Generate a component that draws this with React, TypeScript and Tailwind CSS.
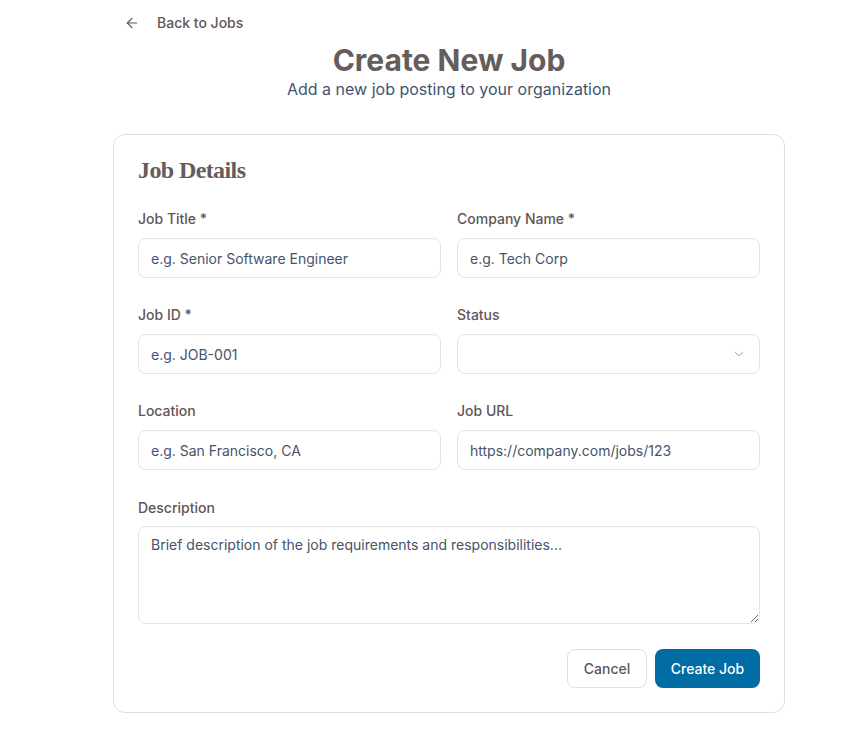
import { ArrowLeft, ChevronDown } from "lucide-react";

const sans = { fontFamily: "Inter, 'Noto Sans', sans-serif" };

function Field({
  label,
  placeholder,
}: {
  label: string;
  placeholder: string;
}) {
  return (
    <div className="flex flex-col">
      <label className="h-5 text-sm font-medium leading-5 text-[#5f5656]">
        {label}
      </label>
      <input
        placeholder={placeholder}
        className="mt-[9px] h-10 w-full rounded-lg border border-[#e3e3e3] bg-white px-3 text-sm text-[#3f4d66] placeholder:text-[#46536b] outline-none"
      />
    </div>
  );
}

export default function App() {
  return (
    <div className="min-h-screen bg-white" style={sans}>
      <div className="ml-[113px] w-[672px] pb-10">
        <button className="mt-[13px] flex h-5 items-center pl-[11px] text-sm font-medium text-[#5f5656]">
          <ArrowLeft className="h-4 w-4" strokeWidth={1.8} />
          <span className="ml-[17px]">Back to Jobs</span>
        </button>

        <div className="mt-[9px] text-center">
          <h1 className="text-3xl font-bold leading-9 text-[#655c5c]">
            Create New Job
          </h1>
          <p className="-mt-px text-base leading-6 text-[#44546e]">
            Add a new job posting to your organization
          </p>
        </div>

        <div className="mt-[33px] rounded-xl border border-[#dedede] bg-white px-6 pb-6 pt-[23px]">
          <h2
            className="text-[24px] font-bold leading-6 tracking-[-0.6px] text-[#655c5c]"
            style={{ fontFamily: "'Liberation Serif', 'DejaVu Serif', serif" }}
          >
            Job Details
          </h2>

          <div className="mt-[27px] grid grid-cols-2 gap-x-4 gap-y-[27px]">
            <Field label="Job Title *" placeholder="e.g. Senior Software Engineer" />
            <Field label="Company Name *" placeholder="e.g. Tech Corp" />
            <Field label="Job ID *" placeholder="e.g. JOB-001" />
            <div className="flex flex-col">
              <label className="h-5 text-sm font-medium leading-5 text-[#5f5656]">
                Status
              </label>
              <button className="mt-[9px] flex h-10 w-full items-center justify-end rounded-lg border border-[#e3e3e3] bg-white px-3">
                <ChevronDown className="h-4 w-4 text-[#a8a8a8]" strokeWidth={1.5} />
              </button>
            </div>
            <Field label="Location" placeholder="e.g. San Francisco, CA" />
            <Field label="Job URL" placeholder="https://company.com/jobs/123" />
          </div>

          <div className="mt-[28px] flex flex-col">
            <label className="h-5 text-sm font-medium leading-5 text-[#5f5656]">
              Description
            </label>
            <textarea
              placeholder="Brief description of the job requirements and responsibilities..."
              className="mt-2 h-[98px] w-full rounded-lg border border-[#e3e3e3] bg-white px-3 py-2 text-sm leading-5 text-[#3f4d66] placeholder:text-[#46536b] outline-none"
            />
          </div>

          <div className="mt-[25px] flex justify-end gap-2">
            <button className="h-[39px] w-[80px] rounded-lg border border-[#e0e0e0] bg-white text-sm font-medium text-[#5f5656]">
              Cancel
            </button>
            <button className="h-[39px] w-[105px] rounded-lg bg-[#006ca3] text-sm font-medium text-white">
              Create Job
            </button>
          </div>
        </div>
      </div>
    </div>
  );
}
